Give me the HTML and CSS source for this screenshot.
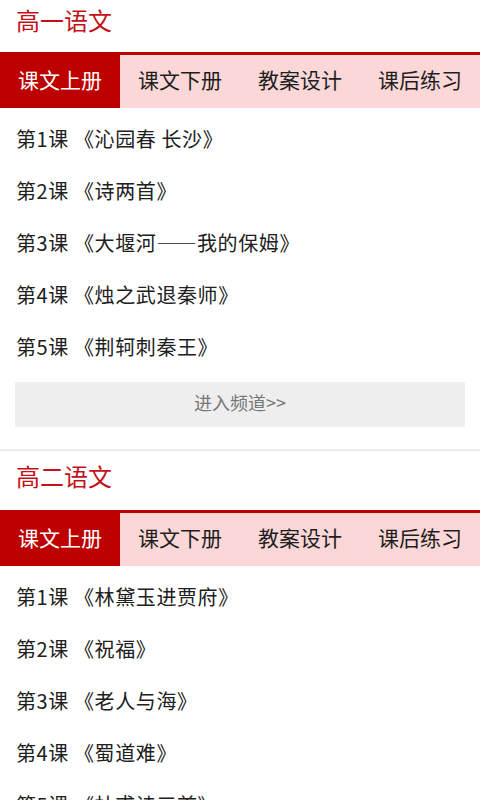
FILE: index.html
```html
<!DOCTYPE html>
<html lang="zh-CN">
<head>
<meta charset="utf-8">
<title>语文</title>
<link rel="stylesheet" href="styles.css">
</head>
<body>
<div class="page">
  <section class="section">
    <h2 class="title">高一语文</h2>
    <div class="tabs">
      <div class="tab active">课文上册</div>
      <div class="tab">课文下册</div>
      <div class="tab">教案设计</div>
      <div class="tab">课后练习</div>
    </div>
    <ul class="list">
      <li class="item">第1课 《沁园春 长沙》</li>
      <li class="item">第2课 《诗两首》</li>
      <li class="item">第3课 《大堰河——我的保姆》</li>
      <li class="item">第4课 《烛之武退秦师》</li>
      <li class="item">第5课 《荆轲刺秦王》</li>
    </ul>
    <div class="more">进入频道&gt;&gt;</div>
  </section>
  <section class="section">
    <h2 class="title">高二语文</h2>
    <div class="tabs">
      <div class="tab active">课文上册</div>
      <div class="tab">课文下册</div>
      <div class="tab">教案设计</div>
      <div class="tab">课后练习</div>
    </div>
    <ul class="list">
      <li class="item">第1课 《林黛玉进贾府》</li>
      <li class="item">第2课 《祝福》</li>
      <li class="item">第3课 《老人与海》</li>
      <li class="item">第4课 《蜀道难》</li>
      <li class="item">第5课 《杜甫诗三首》</li>
    </ul>
    <div class="more">进入频道&gt;&gt;</div>
  </section>
</div>
</body>
</html>
```
FILE: styles.css
```css
html, body {
  margin: 0;
  padding: 0;
  background: #ffffff;
}
body {
  font-family: "Noto Sans CJK SC", "Noto Sans", sans-serif;
  color: #202020;
  overflow: hidden;
}
.page {
  width: 480px;
}
.section + .section {
  border-top: 2px solid #ececec;
  margin-top: 22px;
}
.title {
  margin: 0;
  padding: 0 16px;
  height: 52px;
  line-height: 40px;
  font-size: 24px;
  font-weight: normal;
  color: #c4121a;
}
.section + .section .title {
  height: 59px;
  line-height: 50px;
}
.tabs {
  display: flex;
  border-top: 3px solid #bd0000;
  background: #fbd7d8;
}
.tab {
  box-sizing: border-box;
  width: 120px;
  height: 53px;
  padding-bottom: 5px;
  display: flex;
  align-items: center;
  justify-content: center;
  font-size: 21px;
  color: #1e1e1e;
}
.tab.active {
  background: #bd0000;
  color: #ffffff;
}
.list {
  list-style: none;
  margin: 0;
  padding: 6px 0 0;
}
.item {
  height: 52px;
  line-height: 50px;
  padding-left: 16px;
  font-size: 20px;
  letter-spacing: 0.6px;
  white-space: nowrap;
}
.more {
  margin: 8px 15px 0;
  height: 45px;
  line-height: 41px;
  background: #eeeeee;
  text-align: center;
  font-size: 18px;
  color: #777777;
}
```
